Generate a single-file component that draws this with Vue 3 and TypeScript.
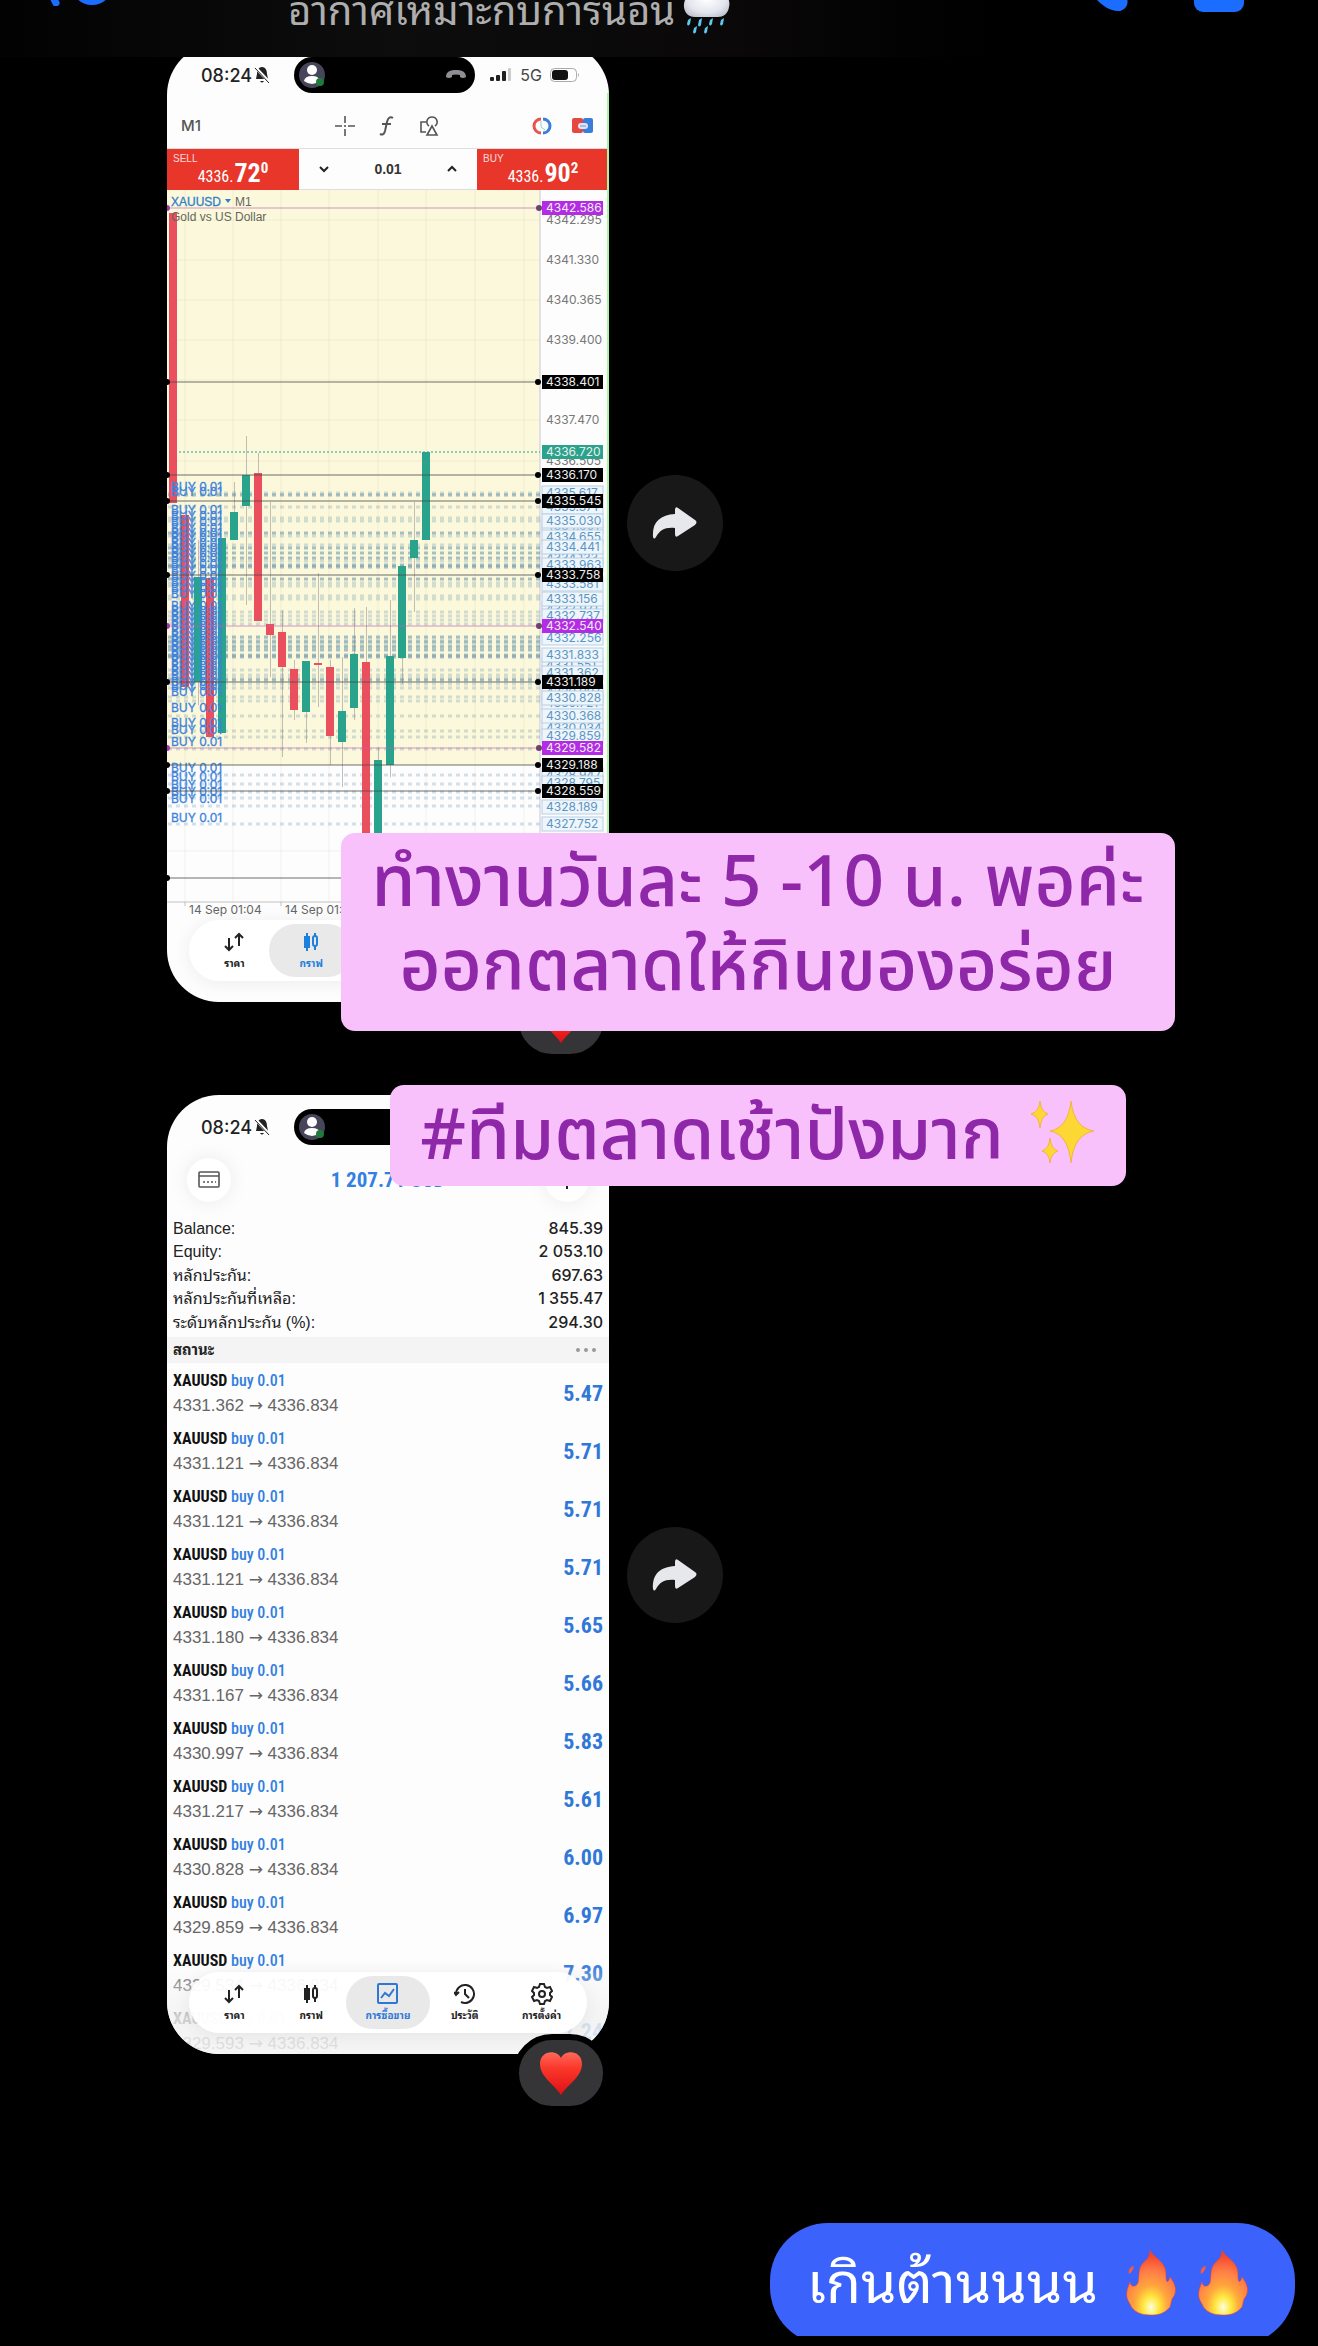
<script setup lang="ts">
type Tone = 'plain' | 'blue' | 'black' | 'purple' | 'teal'

interface PriceLabel { y: number; text: string; tone: Tone }
interface Candle { x: number; top: number; bottom: number; up: boolean; high?: number; low?: number }
interface Position { open: string; profit: string }
interface Tab { id: string; label: string }

const tabs: Tab[] = [
  { id: 'quotes', label: 'ราคา' },
  { id: 'chart', label: 'กราฟ' },
  { id: 'trade', label: 'การซื้อขาย' },
  { id: 'history', label: 'ประวัติ' },
  { id: 'settings', label: 'การตั้งค่า' },
]

const phones = [
  { id: 'chart', active: 'chart' },
  { id: 'trade', active: 'trade' },
]

const labels: PriceLabel[] = [
  { y: 30, text: '4342.295', tone: 'plain' },
  { y: 70, text: '4341.330', tone: 'plain' },
  { y: 110, text: '4340.365', tone: 'plain' },
  { y: 150, text: '4339.400', tone: 'plain' },
  { y: 230, text: '4337.470', tone: 'plain' },
  { y: 271, text: '4336.505', tone: 'plain' },
  { y: 303, text: '4335.617', tone: 'blue' },
  { y: 317, text: '4335.371', tone: 'blue' },
  { y: 336, text: '4334.901', tone: 'blue' },
  { y: 331, text: '4335.030', tone: 'blue' },
  { y: 347, text: '4334.655', tone: 'blue' },
  { y: 368, text: '4334.133', tone: 'blue' },
  { y: 357, text: '4334.441', tone: 'blue' },
  { y: 375, text: '4333.963', tone: 'blue' },
  { y: 394, text: '4333.581', tone: 'blue' },
  { y: 419, text: '4332.971', tone: 'blue' },
  { y: 409, text: '4333.156', tone: 'blue' },
  { y: 426, text: '4332.737', tone: 'blue' },
  { y: 448, text: '4332.256', tone: 'blue' },
  { y: 475, text: '4331.551', tone: 'blue' },
  { y: 465, text: '4331.833', tone: 'blue' },
  { y: 483, text: '4331.362', tone: 'blue' },
  { y: 502, text: '4330.997', tone: 'blue' },
  { y: 513, text: '4330.721', tone: 'blue' },
  { y: 508, text: '4330.828', tone: 'blue' },
  { y: 538, text: '4330.034', tone: 'blue' },
  { y: 526, text: '4330.368', tone: 'blue' },
  { y: 546, text: '4329.859', tone: 'blue' },
  { y: 585, text: '4328.947', tone: 'blue' },
  { y: 593, text: '4328.795', tone: 'blue' },
  { y: 617, text: '4328.189', tone: 'blue' },
  { y: 634, text: '4327.752', tone: 'blue' },
  { y: 18, text: '4342.586', tone: 'purple' },
  { y: 192, text: '4338.401', tone: 'black' },
  { y: 262, text: '4336.720', tone: 'teal' },
  { y: 285, text: '4336.170', tone: 'black' },
  { y: 311, text: '4335.545', tone: 'black' },
  { y: 385, text: '4333.758', tone: 'black' },
  { y: 436, text: '4332.540', tone: 'purple' },
  { y: 492, text: '4331.189', tone: 'black' },
  { y: 558, text: '4329.582', tone: 'purple' },
  { y: 575, text: '4329.188', tone: 'black' },
  { y: 601, text: '4328.559', tone: 'black' },
]

const levels = [192, 285, 311, 385, 492, 575, 601, 688]
const alerts = [18, 436, 558]
const gridX = [18, 66, 114, 162, 211, 259, 308, 357]
const gridY = [30, 70, 110, 150, 190, 230, 271, 661]

const strongOrders = [305, 343, 358, 363, 368, 375, 377, 389, 447, 452, 457, 460, 465, 467, 490]
const lightOrders = [
  303, 317, 328, 331, 346, 355, 371, 393, 396, 406, 409, 422, 426, 430, 434, 450, 455, 480, 485, 488, 494, 498, 507, 511,
  526, 541, 547, 559, 585, 594, 602, 608, 616, 634,
]

const buyTags = [
  297, 302, 320, 326, 332, 338, 343, 348, 353, 358, 363, 368, 374, 380, 386, 392, 398, 404, 416, 421, 426, 431, 436, 441,
  446, 451, 456, 461, 466, 471, 476, 481, 486, 492, 496, 502, 518, 533, 540, 552, 578, 587, 595, 602, 609, 628,
]

const candles: Candle[] = [
  { x: 2, top: 23, bottom: 313, up: false },
  { x: 14, top: 325, bottom: 497, up: false },
  { x: 27, top: 387, bottom: 492, up: true, high: 350, low: 515 },
  { x: 39, top: 388, bottom: 547, up: false },
  { x: 51, top: 348, bottom: 543, up: true },
  { x: 63, top: 322, bottom: 350, up: true, high: 292, low: 350 },
  { x: 75, top: 285, bottom: 316, up: true, high: 246, low: 415 },
  { x: 87, top: 283, bottom: 431, up: false, high: 263, low: 431 },
  { x: 99, top: 434, bottom: 445, up: false, high: 312, low: 487 },
  { x: 111, top: 442, bottom: 477, up: false, high: 420, low: 567 },
  { x: 123, top: 479, bottom: 520, up: false, high: 470, low: 530 },
  { x: 135, top: 471, bottom: 522, up: true, high: 471, low: 553 },
  { x: 147, top: 473, bottom: 475, up: false, high: 383, low: 517 },
  { x: 159, top: 477, bottom: 546, up: false, high: 470, low: 575 },
  { x: 171, top: 521, bottom: 552, up: true, high: 467, low: 597 },
  { x: 183, top: 464, bottom: 518, up: true, high: 418, low: 530 },
  { x: 195, top: 472, bottom: 660, up: false, high: 417, low: 660 },
  { x: 207, top: 570, bottom: 660, up: true, high: 557, low: 660 },
  { x: 219, top: 466, bottom: 575, up: true, high: 410, low: 587 },
  { x: 231, top: 376, bottom: 468, up: true, high: 376, low: 494 },
  { x: 243, top: 350, bottom: 368, up: true, high: 312, low: 422 },
  { x: 255, top: 262, bottom: 350, up: true },
]

const summary = [
  { name: 'Balance:', value: '845.39' },
  { name: 'Equity:', value: '2 053.10' },
  { name: 'หลักประกัน:', value: '697.63' },
  { name: 'หลักประกันที่เหลือ:', value: '1 355.47' },
  { name: 'ระดับหลักประกัน (%):', value: '294.30' },
]

const positions: Position[] = [
  { open: '4331.362', profit: '5.47' },
  { open: '4331.121', profit: '5.71' },
  { open: '4331.121', profit: '5.71' },
  { open: '4331.121', profit: '5.71' },
  { open: '4331.180', profit: '5.65' },
  { open: '4331.167', profit: '5.66' },
  { open: '4330.997', profit: '5.83' },
  { open: '4331.217', profit: '5.61' },
  { open: '4330.828', profit: '6.00' },
  { open: '4329.859', profit: '6.97' },
  { open: '4329.534', profit: '7.30' },
  { open: '4329.593', profit: '7.24' },
]
</script>

<template>
  <div class="page">
    <header class="topbar">
      <button class="icon-btn back" aria-label="Back">
        <svg width="68" height="34" viewBox="0 0 68 34"><path d="M12 31 L3 14" stroke="#1a6dff" stroke-width="7" stroke-linecap="round" /><circle cx="48" cy="12" r="21" fill="#1a6dff" /></svg>
      </button>
      <h1 class="title">
        <span>อากาศเหมาะกับการนอน</span>
        <svg class="cloud" viewBox="0 0 48 54" aria-label="rain cloud">
          <defs><radialGradient id="cloud" cx=".5" cy=".45" r=".6"><stop offset="0" stop-color="#fff" /><stop offset=".7" stop-color="#e3e5ee" /><stop offset="1" stop-color="#c3c6d0" /></radialGradient></defs>
          <path d="M12 37 C2 37 -1 27 2 20 C4 13 10 12 12 13 C14 3 32 2 35 12 C43 12 48 20 46 27 C45 34 40 37 35 37Z" fill="url(#cloud)" />
          <g fill="#5cc8ee"><path d="M5 40 L8 38 L7 44 Q5 47 4 44Z" /><path d="M16 40 L19 38 L18 45 Q16 48 15 45Z" /><path d="M27 40 L30 38 L29 44 Q27 47 26 44Z" /><path d="M38 40 L41 38 L40 44 Q38 47 37 44Z" /><path d="M11 48 L14 46 L13 52 Q11 55 10 52Z" /><path d="M22 48 L25 46 L24 52 Q22 55 21 52Z" /></g>
        </svg>
      </h1>
      <div class="calls">
        <button class="icon-btn" aria-label="Call"><svg width="48" height="40" viewBox="0 0 48 40"><path d="M2 6 C8 22 20 38 36 39 C44 39 48 30 44 25 L34 18 L26 22 L14 8Z" fill="#1a6dff" /></svg></button>
        <button class="icon-btn" aria-label="Video"><svg width="50" height="34" viewBox="0 0 50 34"><rect width="50" height="34" rx="9" fill="#1a6dff" /></svg></button>
      </div>
    </header>

    <main class="thread">
      <article v-for="phone in phones" :key="phone.id" class="message">
        <div class="shot-wrap">
          <section class="phone" :class="phone.id">
            <div class="status">
              <span class="clock">08:24</span>
              <svg class="bell" width="16" height="18" viewBox="0 0 16 18"><path d="M8 1 C4 1 3 5 3 8 L2 13 H14 L13 8 C13 5 12 1 8 1Z" fill="#222" /><path d="M6 15 H10 Q8 18 6 15" fill="#222" /><path d="M2 2 L15 16" stroke="#fff" stroke-width="3" /><path d="M1 2 L15 17" stroke="#222" stroke-width="1" /></svg>
              <div class="island">
                <svg width="26" height="26" viewBox="0 0 26 26"><circle cx="13" cy="13" r="13" fill="#474559" /><circle cx="13" cy="8" r="5" fill="#fff" /><path d="M5 19 Q6 14 13 14 Q20 14 21 19 Q13 25 5 19" fill="#fff" /><circle cx="21" cy="20" r="4" fill="#1f7a3c" /></svg>
                <svg width="22" height="12" viewBox="0 0 22 12"><path d="M1 8 C1 2 6 1 11 1 C16 1 21 2 21 8 Q18 10 15 8 V6 Q11 5 7 6 V8 Q4 10 1 8" fill="#8f8f93" /></svg>
              </div>
              <svg width="22" height="14" viewBox="0 0 22 14"><rect y="9" width="4" height="4" rx="1" fill="#222" /><rect x="6" y="7" width="4" height="6" rx="1" fill="#222" /><rect x="12" y="3" width="4" height="10" rx="1" fill="#222" /><rect x="18" width="3" height="13" rx="1" fill="#ccc" /></svg>
              <span class="net">5G</span>
              <svg width="30" height="14" viewBox="0 0 30 14"><rect x=".5" y=".5" width="26" height="13" rx="4" fill="none" stroke="#aaa" /><rect x="2" y="2" width="16" height="10" rx="3" fill="#111" /><path d="M28 5 Q30 7 28 9Z" fill="#aaa" /></svg>
            </div>

            <template v-if="phone.id === 'chart'">
              <div class="toolbar">
                <span class="frame">M1</span>
                <div class="tools">
                  <svg width="20" height="20" viewBox="0 0 20 20" fill="none" stroke="#555" stroke-width="1.6"><path d="M10 0V7M10 13V20M0 10H7M13 10H20M10 9V11" /></svg>
                  <svg width="16" height="20" viewBox="0 0 16 20" fill="none" stroke="#555" stroke-width="2"><path d="M14 2 C11 0 9 2 8 6 L6 15 C5 19 3 19 1 18 M3 8H12" /></svg>
                  <svg width="20" height="20" viewBox="0 0 20 20" fill="none" stroke="#555" stroke-width="1.6"><path d="M7 6H2V16H7" /><path d="M10 10 C6 7 8 1 13 1 C18 1 20 7 16 10" /><path d="M13 10 L18 19 H8Z" /></svg>
                </div>
                <div class="modes">
                  <svg width="22" height="18" viewBox="0 0 22 18" fill="none" stroke-width="3"><path d="M10 2 A7 7 0 0 0 10 16" stroke="#e5554c" /><path d="M12 2 A7 7 0 0 1 12 16" stroke="#3a7edb" /><path d="M10 4V10L14 13" stroke="#9cc" stroke-width="1" /></svg>
                  <svg width="22" height="16" viewBox="0 0 22 16"><rect width="11" height="15" rx="2" fill="#e5483f" /><rect x="11" width="10" height="15" rx="2" fill="#3a7edb" /><rect x="6" y="5" width="10" height="6" rx="3" fill="#dde4f4" /><path d="M8 8H14" stroke="#7a8fd0" /></svg>
                </div>
              </div>
              <div class="ticket">
                <button class="quote"><span class="side">SELL</span><span class="rate"><span>4336.</span><b>72</b><sup>0</sup></span></button>
                <div class="volume">
                  <button class="step" aria-label="Less"><svg width="10" height="8" viewBox="0 0 10 8"><path d="M1 2 L5 6 L9 2" fill="none" stroke="#222" stroke-width="2" /></svg></button>
                  <input type="text" value="0.01" aria-label="Volume" />
                  <button class="step" aria-label="More"><svg width="10" height="8" viewBox="0 0 10 8"><path d="M1 6 L5 2 L9 6" fill="none" stroke="#222" stroke-width="2" /></svg></button>
                </div>
                <button class="quote"><span class="side">BUY</span><span class="rate"><span>4336.</span><b>90</b><sup>2</sup></span></button>
              </div>
              <svg class="plot" viewBox="0 0 442 812">
                <rect width="373" height="575" fill="#fbf8dc" />
                <g stroke="#8a8a80" stroke-opacity=".1"><path v-for="x in gridX" :key="x" :d="`M${x} 0V712`" /><path v-for="y in gridY" :key="y" :d="`M0 ${y}H373`" /></g>
                <path d="M373 0V712" stroke="#c9c6d8" />
                <g stroke="#2f6f9a" stroke-width="3" stroke-dasharray="4 4">
                  <path v-for="y in lightOrders" :key="'l' + y" :d="`M1 ${y}H373`" stroke-opacity=".2" />
                  <path v-for="y in strongOrders" :key="'s' + y" :d="`M1 ${y}H373`" stroke-opacity=".42" />
                </g>
                <path d="M12 262H373" stroke="#26a08a" stroke-dasharray="2 2" />
                <g v-for="c in candles" :key="c.x" :fill="c.up ? '#29a38c' : '#ea4f5d'">
                  <rect v-if="c.high" :x="c.x + 4" :y="c.high" width="1" :height="(c.low ?? c.bottom) - c.high" fill="#777" fill-opacity=".45" />
                  <rect :x="c.x" :y="c.top" width="8" :height="c.bottom - c.top" />
                </g>
                <g class="tag"><text v-for="y in buyTags" :key="y" x="4" :y="y + 4">BUY 0.01</text></g>
                <g v-for="y in alerts" :key="'a' + y"><path :d="`M0 ${y}H372`" stroke="#c060b0" stroke-opacity=".65" /><circle cx="0" :cy="y" r="3" fill="#a03aa8" /><circle cx="372" :cy="y" r="3" fill="#704070" /></g>
                <g v-for="y in levels" :key="'v' + y"><path :d="`M0 ${y}H372`" stroke="#4c4c48" stroke-opacity=".8" /><circle cx="0" :cy="y" r="3" fill="#000" /><circle cx="371" :cy="y" r="3" fill="#000" /></g>
                <g v-for="l in labels" :key="l.text" class="price" :class="l.tone"><rect x="375" :y="l.y - 7" width="61" height="14" /><text x="379" :y="l.y + 4">{{ l.text }}</text></g>
                <text class="symbol" x="4" y="16">XAUUSD</text><path d="M58 9H64L61 13Z" fill="#2f7fc8" /><text class="desc" x="68" y="16">M1</text>
                <text class="desc" x="4" y="31">Gold vs US Dollar</text>
                <path d="M0 712H442M18 712V716M114 712V716" stroke="#aaa" stroke-opacity=".7" />
                <text class="time" x="22" y="724">14 Sep 01:04</text><text class="time" x="118" y="724">14 Sep 01:12</text>
              </svg>
            </template>

            <template v-else>
              <div class="account">
                <button class="round" aria-label="Account"><svg width="22" height="18" viewBox="0 0 22 18" fill="none" stroke="#555" stroke-width="1.6"><rect x="1" y="1" width="20" height="15" rx="1" /><path d="M1 5H21" /><path d="M5 11H18" stroke-dasharray="2 2" /></svg></button>
                <strong>1 207.71 USD</strong>
                <button class="round" aria-label="New order"><svg width="20" height="20" viewBox="0 0 20 20"><path d="M10 1V19M1 10H19" stroke="#222" stroke-width="2" /></svg></button>
              </div>
              <dl class="summary"><div v-for="s in summary" :key="s.name"><dt>{{ s.name }}</dt><dd>{{ s.value }}</dd></div></dl>
              <div class="section"><h2>สถานะ</h2><button class="more" aria-label="More"><i></i><i></i><i></i></button></div>
              <ul class="positions">
                <li v-for="(p, i) in positions" :key="i">
                  <div><p class="name"><b>XAUUSD</b> <span>buy 0.01</span></p><p class="move">{{ p.open }} <span>→</span> 4336.834</p></div>
                  <strong>{{ p.profit }}</strong>
                </li>
              </ul>
              <div class="fade"></div>
            </template>

            <nav class="tabs">
              <button v-for="t in tabs" :key="t.id" :class="{ on: t.id === phone.active }">
                <svg width="22" height="22" viewBox="0 0 22 22" fill="none" stroke="currentColor" stroke-width="2">
                  <path v-if="t.id === 'quotes'" d="M6 7V19M2 15L6 19L10 15M16 15V3M12 7L16 3L20 7" />
                  <g v-else-if="t.id === 'chart'"><path d="M7 2V20M15 2V6M15 15V19" /><rect x="5" y="6" width="4" height="10" fill="currentColor" /><rect x="13" y="5" width="4" height="10" rx="2" /></g>
                  <g v-else-if="t.id === 'trade'"><rect x="1" y="1" width="19" height="19" rx="1" /><path d="M4 15L8 10L12 13L17 6" /></g>
                  <g v-else-if="t.id === 'history'"><path d="M2 11A9 9 0 1 1 7 19M0 9L2 12L5 9M11 6V11L15 15" /></g>
                  <g v-else><path d="M9 1H13L14 4L16 5L19 4L21 8L19 10V12L21 14L19 18L16 17L14 18L13 21H9L8 18L6 17L3 18L1 14L3 12V10L1 8L3 4L6 5L8 4Z" /><circle cx="11" cy="11" r="3" /></g>
                </svg>
                <span>{{ t.label }}</span>
              </button>
            </nav>
          </section>
          <button class="reaction" aria-label="Heart">
            <svg width="44" height="46" viewBox="0 0 44 46">
              <defs><linearGradient :id="'heart-' + phone.id" x2="0" y2="1"><stop offset="0" stop-color="#ff6a5c" /><stop offset=".35" stop-color="#fb3a2c" /><stop offset="1" stop-color="#e00f12" /></linearGradient></defs>
              <path d="M22 8 C18 -1 1 0 1 14 C1 27 15 34 22 45 C29 34 43 27 43 14 C43 0 26 -1 22 8Z" :fill="`url(#heart-${phone.id})`" />
            </svg>
          </button>
        </div>
        <button class="share" aria-label="Forward"><svg width="46" height="34" viewBox="0 0 46 34"><path d="M1 31 C0 16 8 9 23 8 V4 Q23 0 26 2 L43 14 Q46 16 43 19 L26 30 Q23 32 23 28 V22 C13 21 8 24 4 31 Q2 34 1 31Z" fill="#e6e8ec" /></svg></button>
      </article>

      <div class="reply">
        <p class="bubble">
          <span>เกินต้านนนน</span>
          <svg v-for="n in 2" :key="n" width="50" height="66" viewBox="0 0 50 66">
            <defs><radialGradient :id="'fire-' + n" cx=".5" cy=".88" r=".8"><stop offset="0" stop-color="#fffde0" /><stop offset=".2" stop-color="#ffe940" /><stop offset=".42" stop-color="#ffa63c" /><stop offset=".7" stop-color="#ff7d48" /><stop offset="1" stop-color="#f4452c" /></radialGradient></defs>
            <path d="M24 0 C27 8 41 11 40 26 C40 33 42 34 44 27 C51 36 51 43 46 49 L44 57 C38 64 32 65 25 65 C15 65 7 62 4 54 C0 48 -1 43 4 32 C5 38 10 37 12 33 C14 24 11 18 19 11 C24 7 23 4 24 0Z" :fill="`url(#fire-${n})`" stroke="#ef4428" stroke-opacity=".55" /><path d="M3 24 C2 20 4 17 8 16 C7 20 6 22 3 24Z" fill="#ff5a34" />
          </svg>
        </p>
      </div>
    </main>

    <div class="captions">
      <p class="caption">ทำงานวันละ 5 -10 น. พอค่ะ<br />ออกตลาดให้กินของอร่อย</p>
      <p class="caption tagline">
        <span>#ทีมตลาดเช้าปังมาก</span>
        <svg width="66" height="64" viewBox="0 0 66 64" fill="#fdd835" stroke="#f2b63c"><path d="M41 1 Q44 28 64 31 Q44 34 41 63 Q38 34 20 31 Q38 28 41 1Z" /><path d="M10 1 Q11 12 18 14 Q11 16 10 28 Q9 16 1 14 Q9 12 10 1Z" /><path d="M20 38 Q21 49 28 51 Q21 53 20 63 Q19 53 12 51 Q19 49 20 38Z" /></svg>
      </p>
    </div>
  </div>
</template>

<style>
body { background: #000; }
</style>

<style scoped>
* { box-sizing: border-box; margin: 0; padding: 0; }
.page {
  --looped: "Noto Sans Thai Looped", "Noto Looped Thai", "Noto Serif Thai", Loma, Garuda, "Noto Sans Thai", sans-serif;
  --narrow: "Roboto Condensed", "Open Sans Condensed", "Noto Sans Condensed", Roboto, sans-serif;
  position: relative; overflow: hidden; background: #000; font-family: Inter, var(--looped);
}
button { border: 0; background: none; font: inherit; color: inherit; display: flex; align-items: center; justify-content: center; }
svg { flex: none; display: block; }

.topbar { position: relative; z-index: 2; height: 57px; overflow: hidden; display: flex; align-items: flex-start; padding: 0 74px 0 44px; background: linear-gradient(90deg, #020202, #0d0d0d 30%, #0a0808 55%, #000 75%); }
.icon-btn { margin-top: -28px; align-items: flex-end; }
.back { width: 68px; }
.title { flex: 1; display: flex; align-items: center; gap: 8px; margin: -20px 0 0 176px; color: #aeaeae; font-family: var(--looped); font-size: 40px; font-weight: 400; line-height: 54px; }
.cloud { width: 48px; height: 54px; }
.calls { display: flex; gap: 64px; }

.thread { margin-top: -14px; padding-bottom: 10px; }
.message { display: flex; align-items: center; gap: 18px; padding-left: 167px; margin-bottom: 93px; }
.shot-wrap { position: relative; }
.phone { position: relative; display: flex; flex-direction: column; width: 442px; height: 959px; overflow: hidden; border-radius: 52px; background: #fdfdfd; color: #222; }
.phone > * { flex-shrink: 0; }
.phone.chart::after { content: ""; position: absolute; right: 0; top: 50px; bottom: 60px; width: 2px; background: #a9f5a0; }
.share { width: 96px; height: 96px; border-radius: 50%; background: #181818; }
.reaction { position: absolute; right: 0; bottom: -58px; width: 96px; height: 78px; border: 6px solid #000; border-radius: 39px; background: #353537; }

.status { display: flex; align-items: center; height: 60px; padding: 4px 29px 0 34px; }
.clock { width: 54px; font-size: 18px; font-weight: 500; }
.island { display: flex; align-items: center; justify-content: space-between; width: 185px; height: 36px; margin: 0 15px 0 24px; padding: 0 8px 0 5px; border-radius: 18px; background: #000; }
.net { margin: 0 8px; font-size: 16px; color: #444; }

.toolbar { display: flex; align-items: center; justify-content: space-between; height: 46px; padding: 0 15px 0 14px; border-bottom: 1px solid #ddd; }
.frame { width: 62px; font-size: 15px; font-weight: 500; color: #555; }
.tools { display: flex; gap: 24px; }
.modes { display: flex; align-items: center; gap: 19px; }
.ticket { display: flex; height: 41px; }
.quote { position: relative; flex: 0 0 132px; background: #e8362b; color: #fff; font-family: var(--narrow); }
.side { position: absolute; left: 6px; top: 4px; font: 10px/12px "Liberation Sans", sans-serif; opacity: .8; }
.rate { display: flex; align-items: baseline; padding-top: 10px; font-size: 16px; line-height: 28px; }
.rate b { margin-left: 1px; font-size: 26px; font-weight: 700; }
.rate sup { align-self: flex-start; font-size: 15px; line-height: 18px; font-weight: 700; }
.volume { flex: 1; display: flex; align-items: center; justify-content: space-between; padding: 0 20px; border-bottom: 1px solid #ddd; }
.volume input { width: 60px; border: 0; background: none; text-align: center; font: 600 14px "Liberation Sans", sans-serif; color: #333; }
.plot { width: 100%; }
.symbol, .desc { font: 12px "Liberation Sans", sans-serif; fill: #66665c; }
.symbol { fill: #2f7fc8; stroke: #2f7fc8; stroke-width: .3px; }
.tag text { font: 12px Inter, sans-serif; fill: #3c83dc; stroke: #3c83dc; stroke-width: .3px; }
.time { font: 12px Inter, sans-serif; fill: #666; }
.price text { font: 12px Inter, sans-serif; fill: #777; }
.price rect { fill: none; }
.price.blue rect { fill: #eef5fb; stroke: #b9cfe4; }
.price.blue text { fill: #5b95c4; }
.price.black rect { fill: #000; }
.price.teal rect { fill: #29a38c; }
.price.purple rect { fill: #b42be6; }
.price.black text, .price.teal text, .price.purple text { fill: #eee; }

.tabs { position: absolute; left: 22px; right: 22px; bottom: 21px; display: flex; height: 61px; padding: 4px 7px; border-radius: 31px; background: rgba(255, 255, 255, .93); box-shadow: 0 2px 18px rgba(0, 0, 0, .07); }
.tabs button { flex: 1 1 0; min-width: 0; flex-direction: column; gap: 3px; border-radius: 27px; font-size: 10px; line-height: 14px; white-space: nowrap; font-weight: 700; color: #222; }
.tabs button.on { margin: 0 -4px; flex-basis: 8px; background: #e9e9ea; color: #2f77d6; }
.chart .tabs button.on { color: #1c80dc; }

.account { display: flex; align-items: center; justify-content: space-between; height: 50px; padding: 0 20px; }
.account strong { font: 700 21px var(--narrow); color: #3280e0; }
.round { width: 44px; height: 44px; border-radius: 50%; background: #fff; box-shadow: 0 0 20px rgba(0, 0, 0, .08); }
.summary { display: grid; height: 117px; margin: 12px 6px 3px; font-size: 16px; line-height: 23px; }
.summary div { display: flex; justify-content: space-between; }
.summary dd { font-weight: 500; }
.summary dt { font-family: "Liberation Sans", var(--looped); white-space: nowrap; }
.section { display: flex; align-items: center; justify-content: space-between; height: 26px; padding: 0 13px 0 6px; background: #f4f4f4; }
.section h2 { font-size: 15px; line-height: 26px; font-weight: 700; }
.more { gap: 4px; }
.more i { width: 4px; height: 4px; border-radius: 50%; background: #999; }
.positions { list-style: none; padding: 1px 6px 0; }
.positions li { display: flex; align-items: center; justify-content: space-between; height: 58px; }
.positions p { line-height: 24px; }
.positions .name { font-family: var(--narrow); font-size: 16px; color: #111; }
.name b { font-weight: 700; }
.name span { color: #3280e0; font-weight: 500; }
.positions .move { font-family: "Liberation Sans", sans-serif; font-size: 17px; color: #666; }
.move span { font-family: "DejaVu Sans", sans-serif; }
.positions strong { font: 700 22px var(--narrow); color: #3078d8; }
.fade { position: absolute; left: 0; right: 0; bottom: 0; height: 92px; background: linear-gradient(rgba(250, 250, 250, 0), rgba(243, 243, 243, .85) 60%); }

.reply { display: flex; justify-content: flex-end; height: 113px; margin-top: 169px; padding-right: 23px; overflow: hidden; }
.bubble { display: flex; align-items: center; gap: 22px; height: 122px; padding: 0 47px 3px 37px; border-radius: 58px; background: #3c62fc; color: #fff; font-family: var(--looped); font-size: 57px; line-height: 80px; white-space: nowrap; }
.bubble span { margin-right: 6px; padding-bottom: 10px; }

.captions { position: absolute; z-index: 3; top: 833px; left: 0; right: 0; display: flex; flex-direction: column; align-items: center; gap: 54px; padding-left: 198px; }
.caption { height: 198px; padding: 4px 31px; border-radius: 14px; background: #f8c1fc; color: #8f28a8; font-family: "Noto Sans", "Noto Sans Thai", sans-serif; font-size: 71px; font-weight: 500; line-height: 84px; text-align: center; white-space: nowrap; }
.tagline { display: flex; align-items: center; gap: 26px; height: 101px; padding: 0 30px 8px; }
</style>
